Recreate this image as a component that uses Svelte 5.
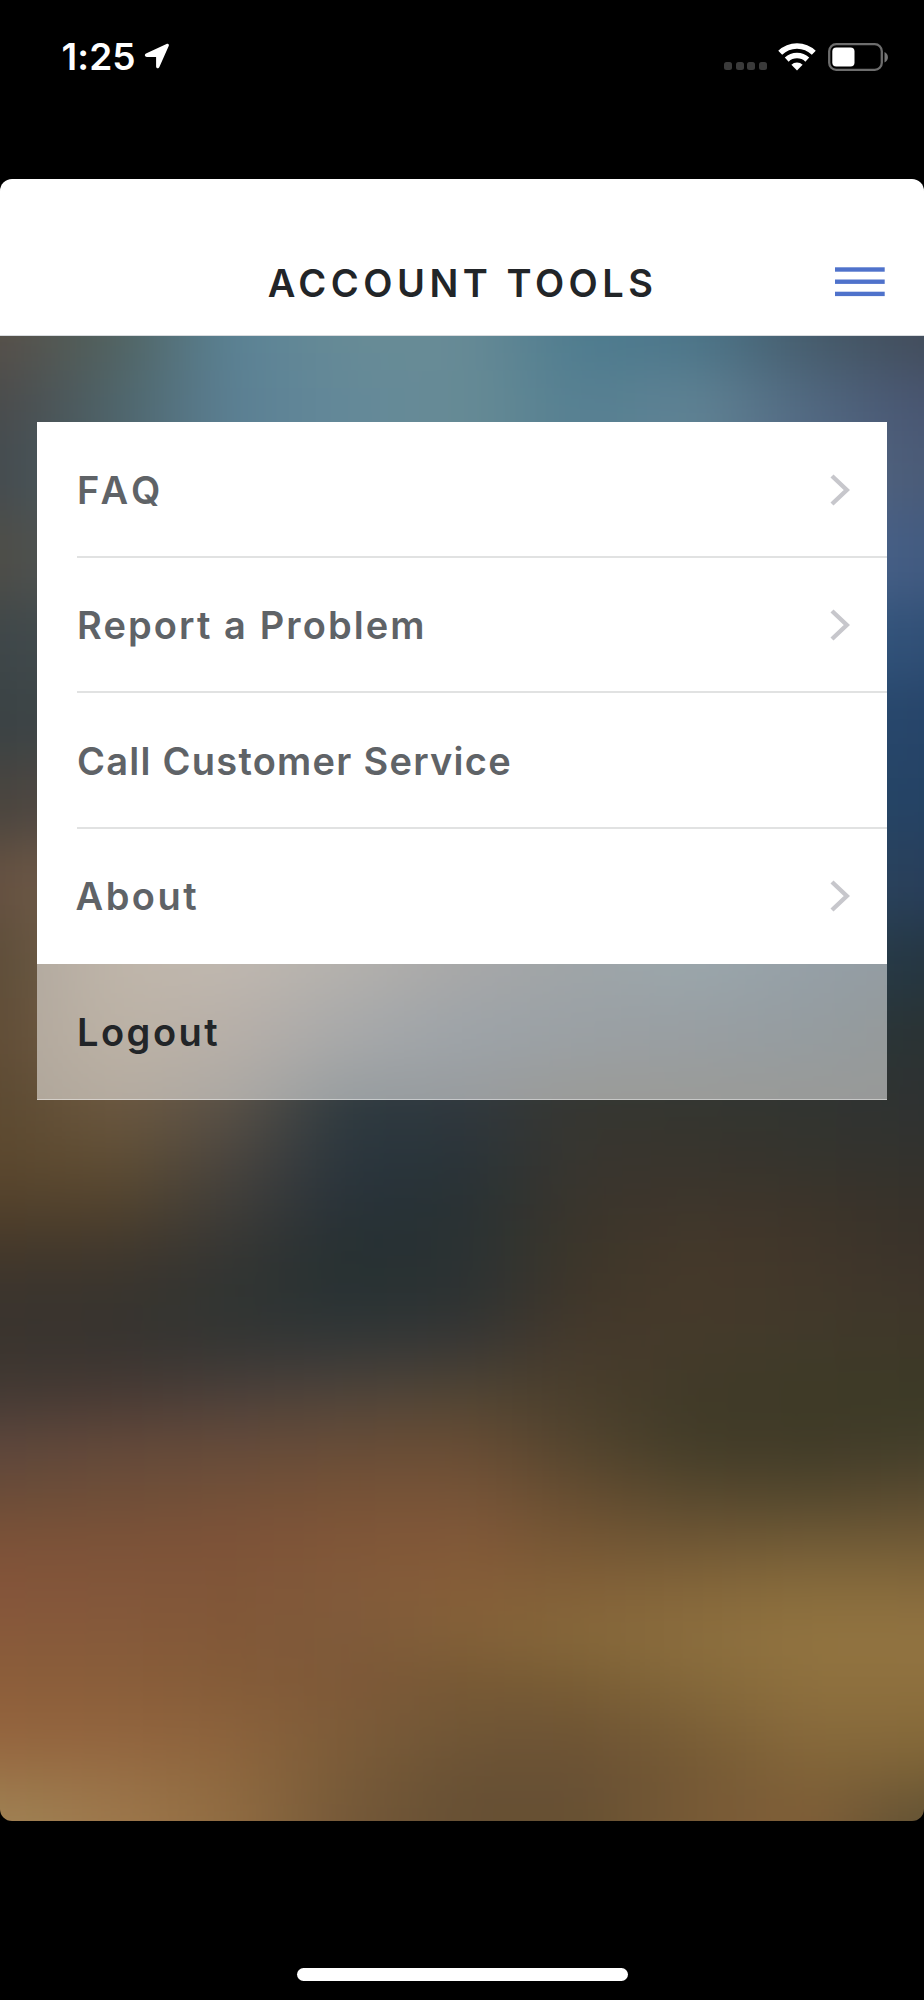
<script>
  const items = [
    { label: 'FAQ', arrow: true, cls: 'faq' },
    { label: 'Report a Problem', arrow: true, cls: 'report' },
    { label: 'Call Customer Service', arrow: false, cls: 'call' },
    { label: 'About', arrow: true, cls: 'about' }
  ];

  // Blurred wallpaper: evenly spaced colour samples per row, left to right.
  const wallpaper = [
    [340, '574f48 50625f 5a8296 678b96 688b96 4e7c8f 4c768a 465c6c 424c5a'],
    [400, '4a4a4a 4e646a 5b8094 648999 678b95 557f91 608394 506880 485470'],
    [460, '444a4e 4e646a 5b8094 648999 678b95 557f91 608394 566a86 4a5a76'],
    [560, '4e4c46 4e5c60 5b8094 648999 678b95 557f91 608394 4c6890 425a80'],
    [640, '3e4648 465054 5b8094 648999 678b95 557f91 50708c 345880 304f76'],
    [720, '3a4244 424a4c 5b7080 607080 607078 507078 406078 2a4c70 264469'],
    [800, '48443e 584c48 6b6864 606468 505c64 486070 3c5c70 284868 244264'],
    [880, '645040 786450 7a6c5c 646058 54585a 40505c 3a5868 2c4860 283e5a'],
    [965, '5c4c38 7f6b53 7f6f5f 67625a 4f4f50 3d494f 354d57 2b3f4d 243642'],
    [1030, '604c36 79654b 6f5f51 505254 3b4751 354149 313d45 293941 2a3232'],
    [1104, '5c4a32 6c5840 5a5248 2e3a40 30383e 363630 343630 323430 2e3232'],
    [1153, '5c482e 625036 4c4640 2a363e 2a343a 383630 38342c 34342e 32322e'],
    [1201, '54422c 54442e 403e3a 28323a 283234 3a342c 3e362c 3c342a 36322a'],
    [1249, '44382a 42382c 363634 263032 2a3234 3c362a 44382a 40362a 3a322a'],
    [1298, '3a342e 38342e 303432 283234 2c3232 40362a 463a2a 42382a 3e362a'],
    [1346, '3a342e 383430 363634 363838 3a3836 463a2c 443a2a 403a2a 3e3828'],
    [1395, '443a34 483a34 4c403a 50443a 524634 4a3e2c 403a28 3e3a26 3c3a26'],
    [1443, '5c463c 62483a 644a3a 664c38 684c34 52442e 423c28 403a28 423e2a'],
    [1492, '6a4c38 6e4e38 725038 765236 765438 644c30 56482e 52462c 584a30'],
    [1540, '7c5238 7c5238 7e5238 805638 825838 745634 6e5634 705a36 705a36'],
    [1588, '84543a 82563a 805638 825a3a 865e38 826038 84663a 886c3c 866a3c'],
    [1637, '885a3a 865a3a 825838 7e5a3a 826038 86683a 8c6e3e 927440 927442'],
    [1685, '8c5e3a 8a5e3a 845c38 7e5838 765834 785c34 84683a 8e703e 8e703e'],
    [1734, '94643e 92643e 8c623c 7c5c38 705636 6e5434 7a5e36 886a3c 866a3a'],
    [1782, '9a7448 987046 8e683e 785a38 685034 685034 745834 806238 765e36'],
    [1821, 'a08456 9e784c 906c42 745838 665034 665032 785a36 805e38 5e5034']
  ];

  const bands = wallpaper.map(([y, colours], i) => {
    const top = i === 0 ? 200 : (wallpaper[i - 1][0] + y) / 2;
    const bottom = i === wallpaper.length - 1 ? 1960 : (wallpaper[i + 1][0] + y) / 2;
    return { id: 'band' + i, top, height: bottom - top + 0.5, stops: colours.split(' ') };
  });
</script>

<div class="screen">
  <header class="status">
    <div class="clock">
      <span>1:25</span>
      <svg width="26" height="26" viewBox="0 0 26 26">
        <path d="M2 10.6 22.5 .9c1.700-.8 3 .5 2.200 2.200L15.400 24c-.9 1.900-3.300 1.500-3.300-.6V14H2.900C.8 14 .1 11.500 2 10.600Z" fill="#fff" />
      </svg>
    </div>
    <div class="signals">
      <div class="dots"><i></i><i></i><i></i><i></i></div>
      <svg class="wifi" width="38" height="28" viewBox="0 0 38 28">
        <g fill="none" stroke="#fff" stroke-width="5.6">
          <path d="M2.200 9.800a24 24 0 0 1 33.600 0" />
          <path d="M8.700 16.600a15 15 0 0 1 20.600 0" />
        </g>
        <path d="M19 27.500 13.400 21.800a8 8 0 0 1 11.200 0Z" fill="#fff" />
      </svg>
      <svg class="battery" width="62" height="28" viewBox="0 0 62 28">
        <rect x="1.2" y="1.2" width="52.6" height="25.6" rx="7" fill="none" stroke="#6d6d6d" stroke-width="2.3" />
        <rect x="4.3" y="4.5" width="22.2" height="19" rx="4" fill="#fff" />
        <path d="M56.500 9c4.600 2 4.600 8.600 0 10.500Z" fill="#767676" />
      </svg>
    </div>
  </header>

  <main class="panel">
    <svg class="wallpaper" viewBox="0 178.500 924 1642.500" preserveAspectRatio="none" aria-hidden="true">
      <defs>
        {#each bands as band}
          <linearGradient id={band.id} gradientUnits="userSpaceOnUse" x1="0" y1="0" x2="924" y2="0">
            {#each band.stops as stop, i}
              <stop offset={i / 8} stop-color={'#' + stop} />
            {/each}
          </linearGradient>
        {/each}
        <filter id="soften" filterUnits="userSpaceOnUse" x="-100" y="200" width="1124" height="1760" color-interpolation-filters="sRGB">
          <feGaussianBlur stdDeviation="30 26" />
        </filter>
      </defs>
      <g filter="url(#soften)">
        {#each bands as band}
          <rect x="-100" y={band.top} width="1124" height={band.height} fill="url(#{band.id})" />
        {/each}
      </g>
    </svg>

    <div class="titlebar">
      <h1>ACCOUNT TOOLS</h1>
      <button class="menu" aria-label="Menu">
        <svg width="50" height="30" viewBox="0 0 50 30" fill="#4f72cb">
          <rect y=".3" width="49.700" height="4.400" />
          <rect y="12.500" width="49.700" height="4.400" />
          <rect y="24.700" width="49.700" height="4.400" />
        </svg>
      </button>
    </div>

    <nav class="card">
      {#each items as item}
        <div class="row">
          <span class={item.cls}>{item.label}</span>
          {#if item.arrow}
            <svg width="20" height="32" viewBox="0 0 20 32">
              <path d="M2 2 16.800 16 2 30" fill="none" stroke="#c7c7cc" stroke-width="4.400" />
            </svg>
          {/if}
        </div>
      {/each}
      <div class="row logout"><span class="out">Logout</span></div>
    </nav>
  </main>

  <footer><div class="home"></div></footer>
</div>

<style>
  :global(body) { background: #000; }
  .screen {
    width: 924px;
    height: 2000px;
    display: flex;
    flex-direction: column;
    background: #000;
    font-family: Inter, "Liberation Sans", sans-serif;
    overflow: hidden;
  }
  .status {
    height: 178.5px;
    flex: none;
    box-sizing: border-box;
    padding: 36px 34.5px 0 61.5px;
    display: flex;
    justify-content: space-between;
    align-items: flex-start;
  }
  .clock {
    display: flex;
    gap: 8px;
    color: #fff;
    font-size: 37px;
    font-weight: 600;
    line-height: 42px;
    letter-spacing: 0.1px;
  }
  .clock svg { margin-top: 7px; }
  .signals { display: flex; padding-top: 7px; }
  .dots { display: flex; gap: 3.7px; margin: 19px 10.5px 0 0; }
  .dots i { width: 8px; height: 8px; border-radius: 2.5px; background: #3a3a3a; }
  .wifi { margin-right: 12px; }
  .panel {
    height: 1642.5px;
    flex: none;
    border-radius: 12px;
    overflow: hidden;
    position: relative;
  }
  .wallpaper { position: absolute; inset: 0; width: 100%; height: 100%; }
  .titlebar {
    position: relative;
    height: 157.5px;
    box-sizing: border-box;
    background: #fff;
    border-bottom: 1px solid #d9dcdf;
    display: grid;
    grid-template-columns: 1fr auto 1fr;
    padding: 79px 39px 0 39px;
  }
  h1 {
    grid-column: 2;
    margin: 0 -1.2px 0 0;
    color: #222528;
    font-size: 38px;
    font-weight: 600;
    line-height: 50px;
    letter-spacing: 4.5px;
  }
  .menu {
    justify-self: end;
    width: 50px;
    height: 30px;
    margin-top: 9.5px;
    padding: 0;
    border: 0;
    background: none;
  }
  .menu svg { display: block; }
  .card {
    position: relative;
    width: 850px;
    margin: 86px 0 0 37px;
    color: #5f6367;
    font-size: 38px;
    font-weight: 600;
  }
  .row {
    height: 135.5px;
    box-sizing: border-box;
    padding: 0 37px 0 40px;
    display: flex;
    align-items: center;
    justify-content: space-between;
    background: linear-gradient(#e1e2e2, #e1e2e2) 40px 100% / 810px 2px no-repeat, #fff;
  }
  .row:nth-child(4) { background: #fff; }
  .faq { letter-spacing: 4.5px; }
  .report { letter-spacing: 2.1px; }
  .call { letter-spacing: 1.25px; }
  .about { letter-spacing: 2.5px; margin-left: -1.5px; }
  .out { letter-spacing: 2.5px; }
  .row.logout {
    background: rgba(255, 255, 255, 0.5);
    box-shadow: inset 0 -1px rgba(255, 255, 255, 0.45);
    color: #222528;
  }
  footer { flex: 1; display: flex; justify-content: center; padding-top: 146.5px; }
  .home { width: 331px; height: 13px; border-radius: 7px; background: #fff; }
</style>
